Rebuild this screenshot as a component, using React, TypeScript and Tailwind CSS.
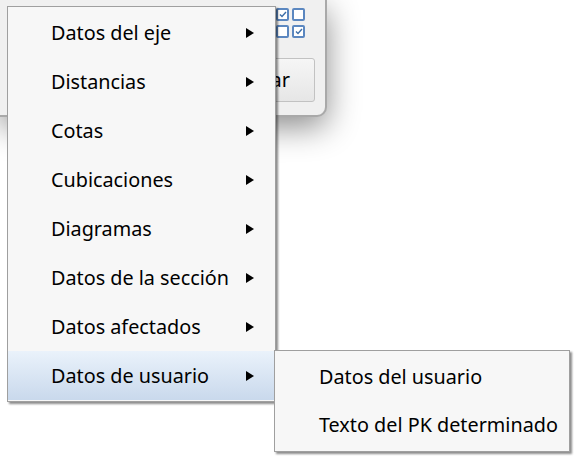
import React from "react";

const items = [
  "Datos del eje",
  "Distancias",
  "Cotas",
  "Cubicaciones",
  "Diagramas",
  "Datos de la sección",
  "Datos afectados",
  "Datos de usuario",
];

const subItems = ["Datos del usuario", "Texto del PK determinado"];

function Arrow() {
  return (
    <div className="w-0 h-0 border-l-[8px] border-l-black border-y-[5.5px] border-y-transparent" />
  );
}

function Check({ checked }: { checked: boolean }) {
  return (
    <div className="w-[13px] h-[13px] border-2 border-[#5b87c0] rounded-[2px] bg-white flex items-center justify-center">
      {checked && (
        <svg width="8" height="7" viewBox="0 0 8 7">
          <path d="M1 3.5 L3 5.5 L7 1" stroke="#3d6ea8" strokeWidth="1.4" fill="none" />
        </svg>
      )}
    </div>
  );
}

export default function App() {
  return (
    <div
      className="relative w-[581px] h-[457px] bg-white overflow-hidden"
      style={{ fontFamily: '"Noto Sans", "Open Sans", sans-serif' }}
    >
      {/* background dialog */}
      <div className="w-[327px] h-[117px] bg-[#f0f0f0] border-r-2 border-b-2 border-[#a9a9a9] rounded-br-[10px] shadow-[0_10px_32px_rgba(0,0,0,0.45)] relative">
        <div className="absolute left-[276px] top-[8px] grid grid-cols-2 gap-x-[3px] gap-y-[4px]">
          <Check checked={true} />
          <Check checked={false} />
          <Check checked={false} />
          <Check checked={true} />
        </div>
        <div className="absolute left-[220px] top-[58px] w-[95px] h-[44px] rounded-[3px] border border-[#c2c2c2] bg-gradient-to-b from-[#f6f6f6] to-[#e6e6e6] flex items-center justify-end pr-[24px] text-[20px] text-black">
          <span>Cerrar</span>
        </div>
      </div>

      {/* main context menu */}
      <div className="absolute left-[7px] top-[6px] w-[269px] bg-[#f7f7f7] border border-[#9f9f9f] py-[1px] shadow-[2px_2px_2px_rgba(0,0,0,0.45)]">
        {items.map((t, i) => (
          <div
            key={t}
            className={
              "h-[49px] flex items-center text-[19.8px] text-black " +
              (i === items.length - 1
                ? "bg-gradient-to-b from-[#eaf2fb] to-[#c9d9ec]"
                : "")
            }
          >
            <span className="pl-[43px] flex-1 whitespace-nowrap">{t}</span>
            <span className="pr-[21px] shrink-0">
              <Arrow />
            </span>
          </div>
        ))}
      </div>

      {/* submenu */}
      <div className="absolute left-[274px] top-[350px] w-[296px] bg-[#f7f7f7] border border-[#9f9f9f] py-[2px] shadow-[2px_2px_2px_rgba(0,0,0,0.45)]">
        {subItems.map((t) => (
          <div key={t} className="h-[48px] flex items-center text-[19.8px] text-black pl-[44px] whitespace-nowrap">
            {t}
          </div>
        ))}
      </div>
    </div>
  );
}
